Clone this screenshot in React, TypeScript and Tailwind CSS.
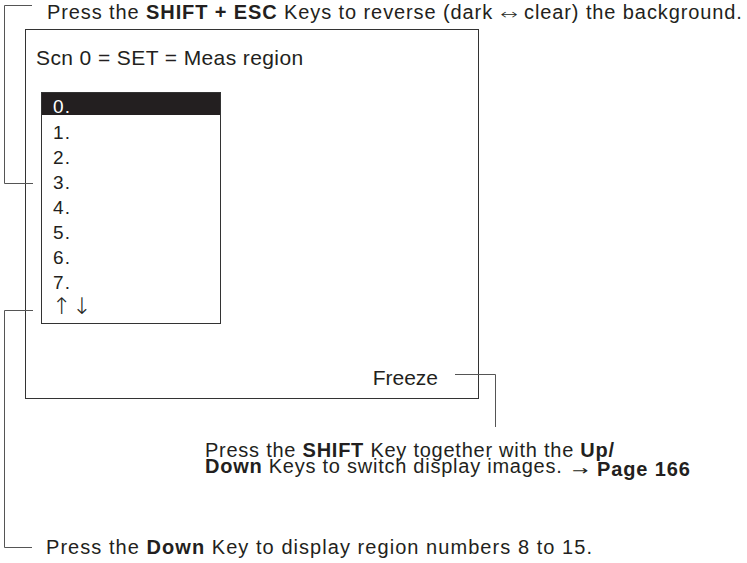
import React from "react";

const arrowFont = { fontFamily: '"DejaVu Sans", sans-serif' };

export default function App() {
  return (
    <div
      className="relative w-[747px] h-[563px] overflow-hidden bg-white text-[#231f20]"
      style={{ fontFamily: '"Liberation Sans", Arial, sans-serif' }}
    >
      <div className="h-[24px] pl-[47px] text-[20px] leading-[24px] tracking-[0.9px] whitespace-nowrap">
        Press the <b>SHIFT + ESC</b> Keys to reverse (dark{" "}
        <span className="inline-block w-[18px] text-center text-[14px] font-light scale-x-150 tracking-normal" style={arrowFont}>
          ↔
        </span>{" "}
        clear) the background.
      </div>

      <div className="mt-[5px] ml-[25px] w-[454px] h-[370px] border border-[#333] flex flex-col">
        <div className="mt-[16px] pl-[10px] text-[21px] leading-[24px] tracking-[0.4px]">
          Scn 0 = SET = Meas region
        </div>
        <div className="mt-[22px] ml-[15px] w-[180px] h-[232px] border border-[#333] text-[19px] leading-[25px] tracking-[1.1px] flex flex-col">
          <div className="bg-[#231f20] text-white pl-[11px] h-[22px] leading-[27px] shrink-0">0.</div>
          <div className="mt-[5px] flex flex-col">
            {["1.", "2.", "3.", "4.", "5.", "6.", "7."].map((t) => (
              <div key={t} className="pl-[11px] h-[25px]">
                {t}
              </div>
            ))}
          </div>
          <div className="pl-[10px] h-[28px] leading-[22px] text-[23px] font-light tracking-[1px]" style={arrowFont}>
            ↑↓
          </div>
        </div>
        <div className="mt-auto pb-[8px] pr-[40px] self-end text-[21px] leading-[24px]">
          Freeze
        </div>
      </div>

      <div className="mt-[43px] pl-[205px] text-[20px] leading-[16px] tracking-[0.75px] whitespace-nowrap">
        <div className="h-[16px]">
          Press the <b>SHIFT</b> Key together with the <b>Up/</b>
        </div>
        <div className="h-[16px]">
          <b>Down</b> Keys to switch display images.{" "}
          <span className="relative top-[2px] inline-block w-[22px] text-center text-[13px] scale-x-150 tracking-normal" style={arrowFont}>
            →
          </span>{" "}
          <b className="relative top-[3px] tracking-[0.85px]">Page 166</b>
        </div>
      </div>

      <div className="mt-[61px] h-[24px] pl-[46px] text-[20px] leading-[24px] tracking-[1.05px] whitespace-nowrap">
        Press the <b>Down</b> Key to display region numbers 8 to 15.
      </div>

      <svg
        className="absolute inset-0 pointer-events-none"
        width="747"
        height="563"
        viewBox="0 0 747 563"
        fill="none"
        stroke="#555"
        strokeWidth="1"
      >
        <polyline points="32,5.5 4.5,5.5 4.5,183.5 33,183.5" />
        <polyline points="33,310.5 4.5,310.5 4.5,547.5 32,547.5" />
        <polyline points="455,374.5 495.5,374.5 495.5,427" />
      </svg>
    </div>
  );
}
